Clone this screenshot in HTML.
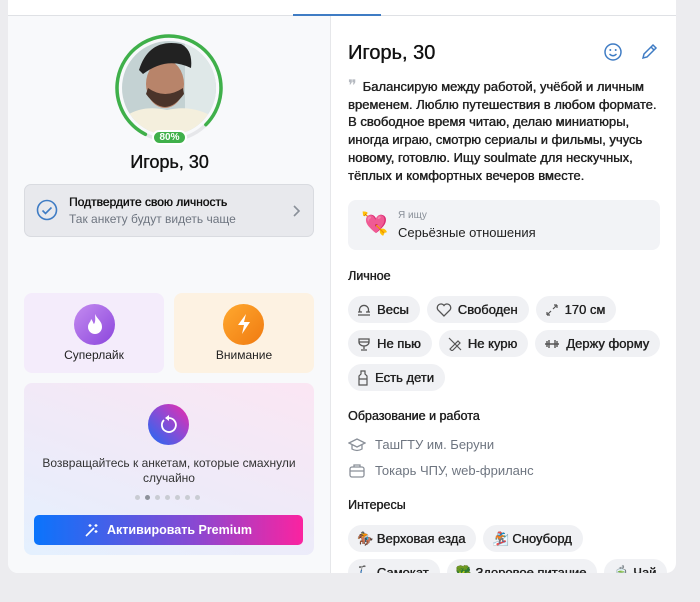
<!DOCTYPE html>
<html><head><meta charset="utf-8"><style>
*{box-sizing:border-box;margin:0;padding:0}
body{width:700px;height:602px;background:#ececef;font-family:"Liberation Sans","Noto Sans CJK SC",sans-serif;position:relative;overflow:hidden;color:#111}
.card{position:absolute;left:8px;top:0;width:668px;height:573px;background:#fff;border-radius:0 0 10px 10px;overflow:hidden}
.hdr{position:absolute;left:0;top:0;width:668px;height:16px;border-bottom:1px solid #dfe1e5;background:#fff}
.ul{position:absolute;left:285px;top:14px;width:88px;height:2px;background:#3f7cc4}
.left{position:absolute;left:0;top:16px;width:323px;height:557px;background:#f8f9fb;border-right:1px solid #e6e7ea}
.abs{position:absolute}
.sb{text-shadow:0 0 0.4px #222,0.3px 0 0 #222}
.verify{left:16px;top:168px;width:290px;height:53px;background:#e8e9ed;border:1px solid #d9dbe0;border-radius:7px}
.tile{height:80px;width:140px;border-radius:8px;top:277px}
.chip{display:inline-flex;align-items:center;height:27px;border-radius:14px;background:#f0f1f4;padding:0 11px 0 9px;font-size:13px;color:#222;margin:0 7px 7px 0;white-space:nowrap;text-shadow:0 0 0.4px #222,0.3px 0 0 #222}
.chip svg{margin-right:6px}
.h{font-size:12.5px;color:#222}
.row{display:flex;flex-wrap:nowrap}
</style></head><body>
<div class="card">
 <div class="hdr"><div class="ul"></div></div>
 <div class="left">
  <svg class="abs" style="left:107px;top:16px" width="110" height="112" viewBox="0 0 110 112">
   <defs><clipPath id="cp"><circle cx="54" cy="56" r="47"/></clipPath></defs>
   <circle cx="54" cy="56" r="52" fill="none" stroke="#e6e7ea" stroke-width="3.5"/>
   <circle cx="54" cy="56" r="52" fill="none" stroke="#3fb04a" stroke-width="3.5" stroke-dasharray="261 327" transform="rotate(117 54 56)" stroke-linecap="round"/>
   <g clip-path="url(#cp)">
   <rect x="0" y="0" width="110" height="112" fill="#c4d2d3"/>
   <rect x="70" y="10" width="40" height="90" fill="#dfe8e8"/>
   <path d="M8 86 Q26 72 52 78 Q78 72 100 86 L100 112 L8 112Z" fill="#f4efdd"/>
   <ellipse cx="50" cy="52" rx="19" ry="24" fill="#b8846a"/>
   <path d="M31 62 Q50 88 69 62 L68 56 Q50 68 33 56Z" fill="#4a342a"/>
   <path d="M24 38 Q34 6 66 12 Q78 18 76 36 Q52 24 28 42Z" fill="#222"/>
   </g>
  </svg>
  <div class="abs" style="left:144px;top:114px;width:35px;height:15px;background:#3fb04a;border:2px solid #fff;border-radius:8px;color:#fff;font-size:10px;font-weight:bold;text-align:center;line-height:11px">80%</div>
  <div class="abs" style="left:0;width:323px;top:136px;text-align:center;font-size:18px" class="sb"><span class="sb">Игорь, 30</span></div>
  <div class="abs verify">
   <svg class="abs" style="left:11px;top:14px" width="22" height="22" viewBox="0 0 22 22"><circle cx="11" cy="11" r="9.5" fill="none" stroke="#3f7cc4" stroke-width="1.6"/><path d="M6.5 11.5l3 3 6-6" fill="none" stroke="#3f7cc4" stroke-width="1.6"/></svg>
   <div class="abs sb" style="left:44px;top:10px;font-size:12px">Подтвердите свою личность</div>
   <div class="abs" style="left:44px;top:27px;font-size:12px;color:#6e7580">Так анкету будут видеть чаще</div>
   <svg class="abs" style="left:266px;top:19px" width="10" height="14"><path d="M3 2l5 5-5 5" fill="none" stroke="#8a9099" stroke-width="1.6"/></svg>
  </div>
  <div class="abs tile" style="left:16px;background:#f4ecfb">
   <div class="abs" style="left:50px;top:11px;width:41px;height:41px;border-radius:50%;background:linear-gradient(135deg,#c48cf0,#8b45dc)"></div>
   <svg class="abs" style="left:61px;top:20px" width="20" height="22" viewBox="0 0 20 22"><path d="M10 1 C12 6 17 8 17 14 A7 7 0 0 1 3 14 C3 10 6 9 6 6 C8 8 8 10 9 11 C11 8 10 4 10 1Z" fill="#fff"/></svg>
   <div class="abs" style="left:0;width:140px;top:55px;text-align:center;font-size:12px;color:#222">Суперлайк</div>
  </div>
  <div class="abs tile" style="left:166px;background:#fdf2e2">
   <div class="abs" style="left:49px;top:11px;width:41px;height:41px;border-radius:50%;background:linear-gradient(135deg,#ffa92f,#f07a10)"></div>
   <svg class="abs" style="left:61px;top:20px" width="18" height="22" viewBox="0 0 18 22"><path d="M11 1 L3 12 H9 L7 21 L15 9 H9Z" fill="#fff"/></svg>
   <div class="abs" style="left:0;width:140px;top:55px;text-align:center;font-size:12px;color:#222">Внимание</div>
  </div>
  <div class="abs" style="left:16px;top:367px;width:290px;height:172px;border-radius:8px;background:linear-gradient(200deg,#fbe6f3,#efeaf8 50%,#e4f0fe)">
   <div class="abs" style="left:124px;top:21px;width:41px;height:41px;border-radius:50%;background:linear-gradient(45deg,#1c6df5,#9a46d0 60%,#f02aa8)"></div>
   <svg class="abs" style="left:134px;top:31px" width="22" height="22" viewBox="0 0 22 22"><path d="M6 6 A7 7 0 1 0 11 4" fill="none" stroke="#fff" stroke-width="1.8"/><path d="M11 1 L11 7 L7 4Z" fill="#fff"/></svg>
   <div class="abs" style="left:0;width:290px;top:73px;text-align:center;font-size:12px;line-height:15px;color:#333">Возвращайтесь к анкетам, которые смахнули<br>случайно</div>
   <div class="abs" style="left:111px;top:112px;display:flex;gap:5px">
    <i style="width:5px;height:5px;border-radius:50%;background:#c9ccd3"></i><i style="width:5px;height:5px;border-radius:50%;background:#8d929b"></i><i style="width:5px;height:5px;border-radius:50%;background:#c9ccd3"></i><i style="width:5px;height:5px;border-radius:50%;background:#c9ccd3"></i><i style="width:5px;height:5px;border-radius:50%;background:#c9ccd3"></i><i style="width:5px;height:5px;border-radius:50%;background:#c9ccd3"></i><i style="width:5px;height:5px;border-radius:50%;background:#c9ccd3"></i>
   </div>
   <div class="abs" style="left:10px;top:132px;width:269px;height:30px;border-radius:5px;background:linear-gradient(90deg,#0a74fc,#8a48d2 60%,#fb23a0);color:#fff;font-size:12.5px;font-weight:bold;text-align:center;line-height:30px">
    <svg style="vertical-align:-3px;margin-right:8px" width="14" height="14" viewBox="0 0 14 14"><path d="M1 13 L9 5" stroke="#fff" stroke-width="1.6"/><path d="M5 1v3M3.5 2.5h3M11 1v3M9.5 2.5h3M11 7v3M9.5 8.5h3" stroke="#fff" stroke-width="1.2"/></svg>Активировать Premium</div>
  </div>
 </div>
 <div class="abs sb" style="left:340px;top:42px;font-size:20px">Игорь, 30</div>
 <svg class="abs" style="left:595px;top:42px" width="20" height="20" viewBox="0 0 20 20"><circle cx="10" cy="10" r="8" fill="none" stroke="#3f7cc4" stroke-width="1.5"/><circle cx="7.3" cy="8" r="1" fill="#3f7cc4"/><circle cx="12.7" cy="8" r="1" fill="#3f7cc4"/><path d="M6.5 12 Q10 15.5 13.5 12" fill="none" stroke="#3f7cc4" stroke-width="1.4"/></svg>
 <svg class="abs" style="left:632px;top:43px" width="18" height="18" viewBox="0 0 18 18"><path d="M3 15 L4 11 L13 2 L16 5 L7 14Z M11 4 L14 7" fill="none" stroke="#3f7cc4" stroke-width="1.5"/></svg>
 <div class="abs sb" style="left:340px;top:78px;width:320px;font-size:13px;line-height:17.7px;color:#222"><span style="color:#b5b9c0;font-size:16px;line-height:10px;margin-right:6px;text-shadow:none">❞</span>Балансирую между работой, учёбой и личным временем. Люблю путешествия в любом формате. В свободное время читаю, делаю миниатюры, иногда играю, смотрю сериалы и фильмы, учусь новому, готовлю. Ищу soulmate для нескучных, тёплых и комфортных вечеров вместе.</div>
 <div class="abs" style="left:340px;top:200px;width:312px;height:50px;border-radius:8px;background:#f2f3f6">
  <div class="abs" style="left:13px;top:12px;font-size:22px;line-height:24px;color:#f0379b">💘</div>
  <div class="abs" style="left:50px;top:10px;font-size:10px;color:#8a9099">Я ищу</div>
  <div class="abs" style="left:50px;top:25px;font-size:13px;color:#222">Серьёзные отношения</div>
 </div>
 <div class="abs h sb" style="left:340px;top:269px">Личное</div>
 <div class="abs" style="left:340px;top:296px;width:330px">
  <div class="row"><span class="chip"><svg width="14" height="14" viewBox="0 0 14 14"><path d="M3 9 A4.5 4.5 0 1 1 11 9 M1 9h4M9 9h4M1 12h12" fill="none" stroke="#555" stroke-width="1.3"/></svg>Весы</span><span class="chip"><svg width="16" height="14" viewBox="0 0 16 14"><path d="M8 13 L2 7 A3.3 3.3 0 0 1 8 2.5 A3.3 3.3 0 0 1 14 7Z" fill="none" stroke="#555" stroke-width="1.3"/></svg>Свободен</span><span class="chip"><svg width="14" height="14" viewBox="0 0 14 14"><path d="M2 12l4-4M2 12V9M2 12h3M12 2L8 6M12 2v3M12 2H9" fill="none" stroke="#555" stroke-width="1.2"/></svg>170 см</span></div>
  <div class="row"><span class="chip"><svg width="14" height="14" viewBox="0 0 14 14"><path d="M2 2h10v3a5 4 0 0 1-10 0Z M7 9v3M4 13h6M2 5h10" fill="none" stroke="#555" stroke-width="1.3"/></svg>Не пью</span><span class="chip"><svg width="14" height="14" viewBox="0 0 14 14"><path d="M2 12 L10 4 L12 6 L4 14Z M1 1l12 12" fill="none" stroke="#555" stroke-width="1.2"/></svg>Не курю</span><span class="chip"><svg width="16" height="14" viewBox="0 0 16 14"><path d="M1 7h14M3 4v6M5 3v8M11 3v8M13 4v6" fill="none" stroke="#555" stroke-width="1.4"/></svg>Держу форму</span></div>
  <div class="row"><span class="chip"><svg width="12" height="16" viewBox="0 0 12 16"><path d="M4 1h4v3l2 2v9H2V6l2-2Z M2 9h8" fill="none" stroke="#555" stroke-width="1.2"/></svg>Есть дети</span></div>
 </div>
 <div class="abs h sb" style="left:340px;top:409px">Образование и работа</div>
 <svg class="abs" style="left:340px;top:437px" width="18" height="16" viewBox="0 0 18 16"><path d="M1 6l8-4 8 4-8 4Z M4 8v4q5 3 10 0V8" fill="none" stroke="#8a9099" stroke-width="1.3"/></svg>
 <div class="abs" style="left:367px;top:437px;font-size:13px;color:#6e7580">ТашГТУ им. Беруни</div>
 <svg class="abs" style="left:340px;top:463px" width="18" height="16" viewBox="0 0 18 16"><rect x="2" y="4" width="14" height="10" rx="2" fill="none" stroke="#8a9099" stroke-width="1.3"/><path d="M6 4V2h6v2M2 8h14" fill="none" stroke="#8a9099" stroke-width="1.3"/></svg>
 <div class="abs" style="left:367px;top:463px;font-size:13px;color:#6e7580">Токарь ЧПУ, web-фриланс</div>
 <div class="abs h sb" style="left:340px;top:498px">Интересы</div>
 <div class="abs" style="left:340px;top:525px;width:340px">
  <div class="row"><span class="chip">🏇 Верховая езда</span><span class="chip">🏂 Сноуборд</span></div>
  <div class="row"><span class="chip">🛴 Самокат</span><span class="chip">🥦 Здоровое питание</span><span class="chip">🍵 Чай</span></div>
 </div>
</div>
</body></html>
